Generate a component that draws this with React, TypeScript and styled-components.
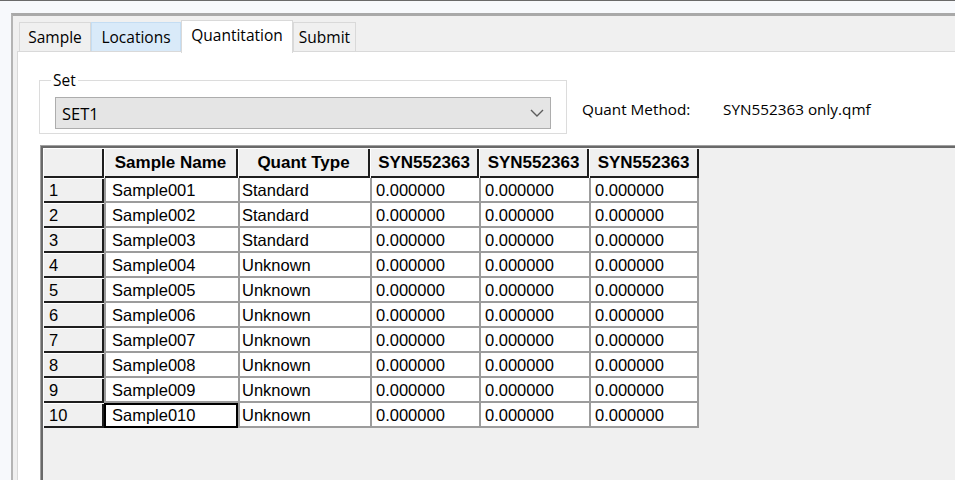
import React from 'react';
import styled, { createGlobalStyle } from 'styled-components';

const GlobalStyle = createGlobalStyle`
  html, body { margin: 0; padding: 0; }
  body {
    background: #f7f9fc;
    font-family: "Open Sans", "Noto Sans", sans-serif;
    color: #000;
  }
  #root { width: 955px; height: 480px; }
`;

const Window = styled.div`
  width: 955px;
  height: 480px;
  box-sizing: border-box;
  border-top: 1px solid #6a6a6a;
  background: #f7f9fc;
  padding: 12px 0 0 11px;
  display: flex;
  flex-direction: column;
  overflow: hidden;
`;

const Frame = styled.div`
  flex: 1;
  display: flex;
  flex-direction: column;
  border-top: 3px solid #a9a9a9;
  border-left: 2px solid #b4b4b4;
  background: #f0f0f0;
  padding: 4px 0 0 4px;
  min-height: 0;
`;

const TabStrip = styled.div`
  display: flex;
  align-items: flex-end;
  height: 31px;
  padding-left: 2px;
  flex-shrink: 0;
`;

type TabState = 'normal' | 'hover' | 'active';

const Tab = styled.div<{ $w: number; $state: TabState }>`
  box-sizing: border-box;
  width: ${(p) => p.$w}px;
  height: ${(p) => (p.$state === 'active' ? 33 : 29)}px;
  margin-bottom: ${(p) => (p.$state === 'active' ? -2 : 0)}px;
  border: 1px solid ${(p) => (p.$state === 'hover' ? '#c4ddf3' : '#d9d9d9')};
  border-bottom: none;
  background: ${(p) =>
    p.$state === 'active' ? '#ffffff' : p.$state === 'hover' ? '#d9eaf9' : '#f0f0f0'};
  display: flex;
  align-items: center;
  justify-content: center;
  padding-bottom: ${(p) => (p.$state === 'active' ? 4 : 0)}px;
  position: relative;
  z-index: ${(p) => (p.$state === 'active' ? 1 : 0)};
  font-size: 15.5px;
  line-height: 19px;
  white-space: nowrap;
`;

const Panel = styled.div`
  flex: 1;
  display: flex;
  flex-direction: column;
  background: #ffffff;
  border-top: 1px solid #d9d9d9;
  border-left: 1px solid #d9d9d9;
  padding: 19px 0 0 21px;
  min-height: 0;
`;

const TopRow = styled.div`
  display: flex;
  align-items: flex-start;
  flex-shrink: 0;
`;

const SetGroup = styled.fieldset`
  margin: 0;
  box-sizing: border-box;
  width: 528px;
  border: 1px solid #dcdcdc;
  padding: 8px 15px 4px 15px;
  min-inline-size: 0;
`;

const SetLegend = styled.legend`
  margin-left: -4px;
  padding: 0 2px;
  font-size: 15.5px;
  line-height: 18px;
`;

const Combo = styled.div`
  box-sizing: border-box;
  height: 32px;
  background: #e5e5e5;
  border: 1px solid #adadad;
  display: flex;
  align-items: center;
  justify-content: space-between;
  padding: 0 6px 0 6px;
  font-size: 16.5px;
`;

const QuantInfo = styled.div`
  display: flex;
  margin: 29px 0 0 15px;
  font-size: 15.3px;
  line-height: 19px;
  white-space: nowrap;
`;

const QuantLabel = styled.span`
  width: 141px;
`;

const GridBox = styled.div`
  flex: 1;
  margin: 11px 0 0 1px;
  border-top: 1px solid #a0a0a0;
  border-left: 1px solid #a0a0a0;
  padding: 2px 0 0 2px;
  box-shadow: inset 2px 2px 0 #696969;
  background: #f0f0f0;
  min-height: 0;
`;

const Table = styled.div`
  display: grid;
  grid-template-columns: 61px 134px 132px 109px 110px 110px;
  grid-template-rows: 30px;
  grid-auto-rows: 25px;
  width: max-content;
  font-family: "Liberation Sans", Arial, sans-serif;
  font-size: 16.5px;
  color: #000;
`;

const HeadCell = styled.div`
  box-sizing: border-box;
  background: #f0f0f0;
  box-shadow: inset 1px 1px 0 #ffffff, inset -2px -2px 0 #1e1e1e;
  display: flex;
  align-items: center;
  justify-content: center;
  padding: 2px 2px 2px 1px;
  font-weight: bold;
  font-size: 17px;
  white-space: nowrap;
  overflow: hidden;
`;

const RowHead = styled.div`
  box-sizing: border-box;
  background: #f0f0f0;
  box-shadow: inset 1px 1px 0 #ffffff, inset -2px -2px 0 #1e1e1e;
  display: flex;
  align-items: center;
  padding: 2px 0 2px 6px;
`;

const DataCell = styled.div<{ $pad: number; $last?: boolean; $current?: boolean }>`
  box-sizing: border-box;
  background: #ffffff;
  border-left: 2px solid ${(p) => (p.$current ? '#000' : '#9c9c9c')};
  border-bottom: 2px solid ${(p) => (p.$current ? '#000' : '#9c9c9c')};
  border-right: ${(p) => (p.$last ? '2px solid #9c9c9c' : 'none')};
  box-shadow: ${(p) => (p.$current ? 'inset -2px 2px 0 #000' : 'none')};
  display: flex;
  align-items: center;
  padding-top: 2px;
  padding-left: ${(p) => p.$pad}px;
  white-space: nowrap;
  overflow: hidden;
`;

const Chevron = () => (
  <svg width="14" height="8" viewBox="0 0 14 8" aria-hidden="true">
    <polyline points="1,1 7,7 13,1" fill="none" stroke="#5c5c5c" strokeWidth="1.4" />
  </svg>
);

const tabs: { label: string; w: number; state: TabState }[] = [
  { label: 'Sample', w: 72, state: 'normal' },
  { label: 'Locations', w: 90, state: 'hover' },
  { label: 'Quantitation', w: 112, state: 'active' },
  { label: 'Submit', w: 63, state: 'normal' },
];

const headers = ['', 'Sample Name', 'Quant Type', 'SYN552363', 'SYN552363', 'SYN552363'];

const rows = Array.from({ length: 10 }, (_, i) => ({
  n: i + 1,
  name: `Sample${String(i + 1).padStart(3, '0')}`,
  type: i < 3 ? 'Standard' : 'Unknown',
  values: ['0.000000', '0.000000', '0.000000'],
}));

export default function App() {
  return (
    <>
      <GlobalStyle />
      <Window>
        <Frame>
          <TabStrip>
            {tabs.map((t) => (
              <Tab key={t.label} $w={t.w} $state={t.state}>
                {t.label}
              </Tab>
            ))}
          </TabStrip>
          <Panel>
            <TopRow>
              <SetGroup>
                <SetLegend>Set</SetLegend>
                <Combo>
                  <span>SET1</span>
                  <Chevron />
                </Combo>
              </SetGroup>
              <QuantInfo>
                <QuantLabel>Quant Method:</QuantLabel>
                <span>SYN552363 only.qmf</span>
              </QuantInfo>
            </TopRow>
            <GridBox>
              <Table>
                {headers.map((h, i) => (
                  <HeadCell key={`h${i}`}>{h}</HeadCell>
                ))}
                {rows.map((r) => (
                  <React.Fragment key={r.n}>
                    <RowHead>{r.n}</RowHead>
                    <DataCell $pad={6} $current={r.n === 10}>
                      {r.name}
                    </DataCell>
                    <DataCell $pad={2}>{r.type}</DataCell>
                    {r.values.map((v, j) => (
                      <DataCell key={j} $pad={4} $last={j === r.values.length - 1}>
                        {v}
                      </DataCell>
                    ))}
                  </React.Fragment>
                ))}
              </Table>
            </GridBox>
          </Panel>
        </Frame>
      </Window>
    </>
  );
}
